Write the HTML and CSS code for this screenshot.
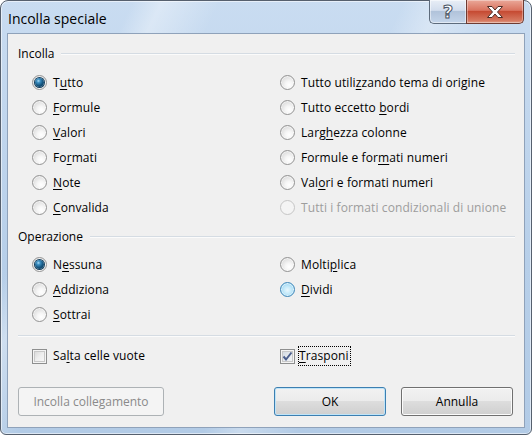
FILE: index.html
```html
<!DOCTYPE html>
<html lang="it">
<head>
<meta charset="utf-8">
<title>Incolla speciale</title>
<link rel="stylesheet" href="styles.css">
</head>
<body>
<div class="window">
  <div class="titlebar">
    <span class="title">Incolla speciale</span>
    <div class="caption">
      <div class="cap-help"><span class="qmark">?</span></div>
      <div class="cap-close">
        <svg width="20" height="14" viewBox="0 0 20 14"><path d="M2.5 1.5 H7 L10 5 L13 1.5 H17.5 L12.5 7 L17.5 12.5 H13 L10 9 L7 12.5 H2.5 L7.5 7 Z" fill="#fff" stroke="#4a2a24" stroke-width="1" stroke-linejoin="round"/></svg>
      </div>
    </div>
  </div>
  <div class="client">
    <div class="group-head"><span>Incolla</span><div class="rule"></div></div>
    <div class="options six">
      <label class="opt"><span class="radio checked"></span><span class="txt">T<u>u</u>tto</span></label>
      <label class="opt"><span class="radio"></span><span class="txt">Tutto utili<u>z</u>zando tema di origine</span></label>
      <label class="opt"><span class="radio"></span><span class="txt"><u>F</u>ormule</span></label>
      <label class="opt"><span class="radio"></span><span class="txt">Tutto eccetto <u>b</u>ordi</span></label>
      <label class="opt"><span class="radio"></span><span class="txt"><u>V</u>alori</span></label>
      <label class="opt"><span class="radio"></span><span class="txt">Larg<u>h</u>ezza colonne</span></label>
      <label class="opt"><span class="radio"></span><span class="txt">Fo<u>r</u>mati</span></label>
      <label class="opt"><span class="radio"></span><span class="txt">Formule e for<u>m</u>ati numeri</span></label>
      <label class="opt"><span class="radio"></span><span class="txt"><u>N</u>ote</span></label>
      <label class="opt"><span class="radio"></span><span class="txt">Val<u>o</u>ri e formati numeri</span></label>
      <label class="opt"><span class="radio"></span><span class="txt"><u>C</u>onvalida</span></label>
      <label class="opt disabled"><span class="radio"></span><span class="txt">Tutti i formati condizionali di unione</span></label>
    </div>
    <div class="group-head second"><span>Operazione</span><div class="rule"></div></div>
    <div class="options three">
      <label class="opt"><span class="radio checked"></span><span class="txt">N<u>e</u>ssuna</span></label>
      <label class="opt"><span class="radio"></span><span class="txt">Molti<u>p</u>lica</span></label>
      <label class="opt"><span class="radio hover"></span><span class="txt"><u>D</u>ividi</span></label>
      <label class="opt"><span class="radio"></span><span class="txt"><u>A</u>ddiziona</span></label>
      <label class="opt"><span class="radio"></span><span class="txt"><u>S</u>ottrai</span></label>
    </div>
    <div class="sep"></div>
    <div class="checks">
      <label class="opt"><span class="checkbox"></span><span class="txt">Sa<u>l</u>ta celle vuote</span></label>
      <label class="opt"><span class="checkbox checked"><svg width="11" height="11" viewBox="0 0 11 11"><path d="M1.5 5.5 L4 8.5 L9.5 1.5" fill="none" stroke="#4c5f8c" stroke-width="2"/></svg></span><span class="txt focus"><u>T</u>rasponi</span></label>
    </div>
    <div class="buttons">
      <button class="btn disabled">Incolla collegamento</button>
      <div class="btn-pair">
        <button class="btn default">OK</button>
        <button class="btn">Annulla</button>
      </div>
    </div>
  </div>
</div>
</body>
</html>
```
FILE: styles.css
```css
html, body {
  margin: 0;
  padding: 0;
  background: #ffffff;
}
body {
  width: 532px;
  height: 435px;
  overflow: hidden;
  font-family: "Open Sans", "Noto Sans", sans-serif;
  font-size: 12px;
  color: #000;
}
.window {
  box-sizing: border-box;
  width: 532px;
  height: 435px;
  border: 1px solid #56606e;
  border-radius: 8px 8px 6px 6px;
  padding: 0 6px 6px 6px;
  display: flex;
  flex-direction: column;
  background:
    linear-gradient(115deg, rgba(255,255,255,0) 0 18%, rgba(255,255,255,.35) 22%, rgba(255,255,255,0) 30%, rgba(255,255,255,0) 55%, rgba(255,255,255,.3) 60%, rgba(255,255,255,0) 68%),
    linear-gradient(#c9dcf1, #b7cfe9 60%, #b2cbe6);
  box-shadow: inset 0 0 0 1px rgba(255,255,255,.55);
}
.titlebar {
  height: 32px;
  display: flex;
  justify-content: space-between;
  align-items: flex-start;
}
.title {
  font-size: 14px;
  padding: 9px 0 0 1px;
  line-height: 18px;
  color: #000;
}
.caption {
  display: flex;
  margin-right: 1px;
  margin-top: -1px;
}
.cap-help, .cap-close {
  height: 24px;
  box-sizing: border-box;
  border: 1px solid #5d6b7c;
  border-top: none;
  display: flex;
  align-items: center;
  justify-content: center;
}
.cap-help {
  width: 37px;
  border-radius: 0 0 0 5px;
  border-right: none;
  background: linear-gradient(#e8eef6 0, #d2dded 45%, #b1c3da 50%, #c4d5ea 100%);
  box-shadow: inset 0 0 0 1px rgba(255,255,255,.5);
}
.qmark {
  font-family: "DejaVu Sans", sans-serif;
  font-weight: bold;
  font-size: 18px;
  line-height: 18px;
  color: #fff;
  -webkit-text-stroke: 1px #4b5564;
  margin-top: 1px;
}
.cap-close {
  width: 58px;
  border-radius: 0 0 5px 0;
  background: linear-gradient(#eaa899 0, #d9735f 45%, #c64b33 50%, #d67a62 90%, #e1a08b 100%);
  box-shadow: inset 0 0 0 1px rgba(255,255,255,.35);
  border-color: #6e3b32;
}
.client {
  flex: 1;
  border: 1px solid #8fa2ba;
  background: #f0f0f0;
  padding: 10px 9px 0 10px;
  display: flex;
  flex-direction: column;
}
.group-head {
  height: 20px;
  display: flex;
  align-items: center;
  gap: 7px;
}
.group-head span {
  line-height: 20px;
}
.group-head .rule {
  flex: 1;
  height: 0;
  border-top: 1px solid #d5dce3;
  border-bottom: 1px solid #fbfbfb;
}
.group-head.second {
  margin-top: 7px;
}
.options {
  display: grid;
  grid-template-columns: 248px 1fr;
  grid-auto-rows: 25px;
  padding-left: 14px;
}
.options.six {
  margin-top: 6px;
}
.options.three {
  margin-top: 5px;
}
.options.three .opt:nth-child(4) { grid-column: 1; grid-row: 2; }
.options.three .opt:nth-child(5) { grid-column: 1; grid-row: 3; }
.options.three .opt:nth-child(2) { grid-column: 2; grid-row: 1; }
.options.three .opt:nth-child(3) { grid-column: 2; grid-row: 2; }
.opt {
  display: flex;
  align-items: center;
  gap: 6px;
  white-space: nowrap;
  line-height: 16px;
}
.txt {
  letter-spacing: 0.1px;
}
.opt.disabled {
  color: #9d9d9d;
}
u {
  text-decoration-thickness: 1px;
  text-underline-offset: 2px;
}
.radio {
  box-sizing: border-box;
  width: 15px;
  height: 15px;
  flex: none;
  border-radius: 50%;
  border: 1px solid #939393;
  background: radial-gradient(circle at 62% 68%, #ffffff 0, #f6f6f6 30%, #dcdcdc 75%, #c9c9c9 100%);
  box-shadow: inset 0 0 0 1px rgba(255,255,255,.6);
  display: flex;
  align-items: center;
  justify-content: center;
}
.radio.checked::after {
  content: "";
  width: 9px;
  height: 9px;
  border-radius: 50%;
  background: radial-gradient(circle at 38% 32%, #a9dcf5 0, #3d8fc2 22%, #14557f 55%, #0b3352 100%);
  box-shadow: 0 0 0 1px #17405e;
}
.radio.hover {
  border-color: #3d86b8;
  background: radial-gradient(circle at 50% 55%, #e9f7fd 0, #c8ebfa 35%, #9fd7f2 75%, #cfeefb 100%);
  box-shadow: inset 0 0 0 1px #dff3fc;
}
.opt.disabled .radio {
  border-color: #c5c5c5;
  background: #f4f4f4;
  box-shadow: none;
}
.sep {
  margin-top: 8px;
  height: 0;
  border-top: 1px solid #d5dce3;
  border-bottom: 1px solid #fbfbfb;
}
.checks {
  margin-top: 9px;
  height: 20px;
  display: grid;
  grid-template-columns: 248px 1fr;
  padding-left: 14px;
}
.checkbox {
  box-sizing: border-box;
  width: 15px;
  height: 15px;
  flex: none;
  border: 1px solid #8e8f8f;
  background: linear-gradient(135deg, #d2d2d2 0, #eeeeee 50%, #fafafa 100%);
  box-shadow: inset 0 0 0 1px #f4f4f4, inset 0 0 0 2px #c8c8c8;
  display: flex;
  align-items: center;
  justify-content: center;
}
.checkbox.checked {
  background: linear-gradient(135deg, #cbd3dc 0, #e6eaee 50%, #f5f7f9 100%);
}
.focus {
  outline: 1px dotted #000;
  outline-offset: 0;
  padding: 1px 1px 1px 0;
  margin-left: -2px;
  line-height: 16px;
}
.buttons {
  margin-top: 21px;
  display: flex;
  justify-content: space-between;
}
.btn-pair {
  display: flex;
  gap: 15px;
  margin-right: 2px;
}
.btn {
  box-sizing: border-box;
  height: 29px;
  width: 112px;
  font-family: inherit;
  font-size: 12px;
  color: #000;
  border: 1px solid #707070;
  border-radius: 3px;
  background: linear-gradient(#f2f2f2 0, #ebebeb 48%, #dddddd 50%, #cfcfcf 100%);
  box-shadow: inset 0 0 0 1px #fbfbfb;
  padding: 0;
}
.btn.default {
  border-color: #3c7fb1;
  box-shadow: inset 0 0 0 1px #bfe4f8;
}
.btn.disabled {
  width: 146px;
  color: #8a8a8a;
  border-color: #adb2b5;
  background: #f4f4f4;
  box-shadow: none;
}
```
